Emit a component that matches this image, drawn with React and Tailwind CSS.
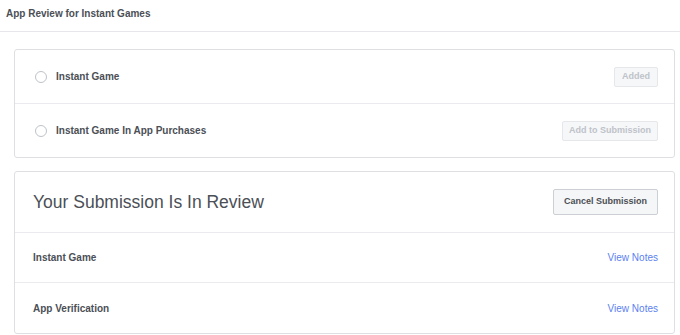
export default function App() {
  const font = { fontFamily: '"Liberation Sans", Arial, sans-serif' };
  return (
    <div className="w-[680px] h-[335px] bg-white overflow-hidden" style={font}>
      <div className="h-[32px] border-b border-[#e5e7ea] pl-[6px] pt-[8px]">
        <div className="text-[10px] leading-[12px] font-bold text-[#4b4f56]">App Review for Instant Games</div>
      </div>
      <div className="pl-[14px] pr-[5px] pt-[17px]">
        <div className="border border-[#dddfe2] rounded-[3px] bg-white">
          <div className="h-[54px] flex items-center justify-between pl-[20px] pr-[16px] border-b border-[#e9ebee]">
            <div className="flex items-center gap-[9px]">
              <span className="w-[12px] h-[12px] rounded-full border border-[#bec3c9] bg-white" />
              <span className="text-[10px] font-bold text-[#4b4f56]">Instant Game</span>
            </div>
            <button className="h-[20px] px-[7px] border border-[#e5e7ea] bg-[#f6f7f9] rounded-[2px] text-[9px] font-bold text-[#bec3c9]">Added</button>
          </div>
          <div className="h-[53px] flex items-center justify-between pl-[20px] pr-[16px]">
            <div className="flex items-center gap-[9px]">
              <span className="w-[12px] h-[12px] rounded-full border border-[#bec3c9] bg-white" />
              <span className="text-[10px] font-bold text-[#4b4f56]">Instant Game In App Purchases</span>
            </div>
            <button className="h-[20px] px-[6px] border border-[#e5e7ea] bg-[#f6f7f9] rounded-[2px] text-[9px] font-bold text-[#bec3c9]">Add to Submission</button>
          </div>
        </div>
        <div className="mt-[13px] border border-[#dddfe2] rounded-[3px] bg-white">
          <div className="h-[61px] flex items-center justify-between pl-[18px] pr-[16px] border-b border-[#e9ebee]">
            <span className="text-[17.5px] text-[#4b4f56] pt-[1px]">Your Submission Is In Review</span>
            <button className="h-[26px] w-[105px] border border-[#ccd0d5] bg-[#f5f6f7] rounded-[2px] text-[9px] font-bold text-[#4b4f56]">Cancel Submission</button>
          </div>
          <div className="h-[50px] flex items-center justify-between pl-[18px] pr-[16px] border-b border-[#e9ebee]">
            <span className="text-[10px] font-bold text-[#4b4f56]">Instant Game</span>
            <span className="text-[10px] text-[#5b7ff0]">View Notes</span>
          </div>
          <div className="h-[50px] flex items-center justify-between pl-[18px] pr-[16px]">
            <span className="text-[10px] font-bold text-[#4b4f56]">App Verification</span>
            <span className="text-[10px] text-[#5b7ff0]">View Notes</span>
          </div>
        </div>
      </div>
    </div>
  );
}
